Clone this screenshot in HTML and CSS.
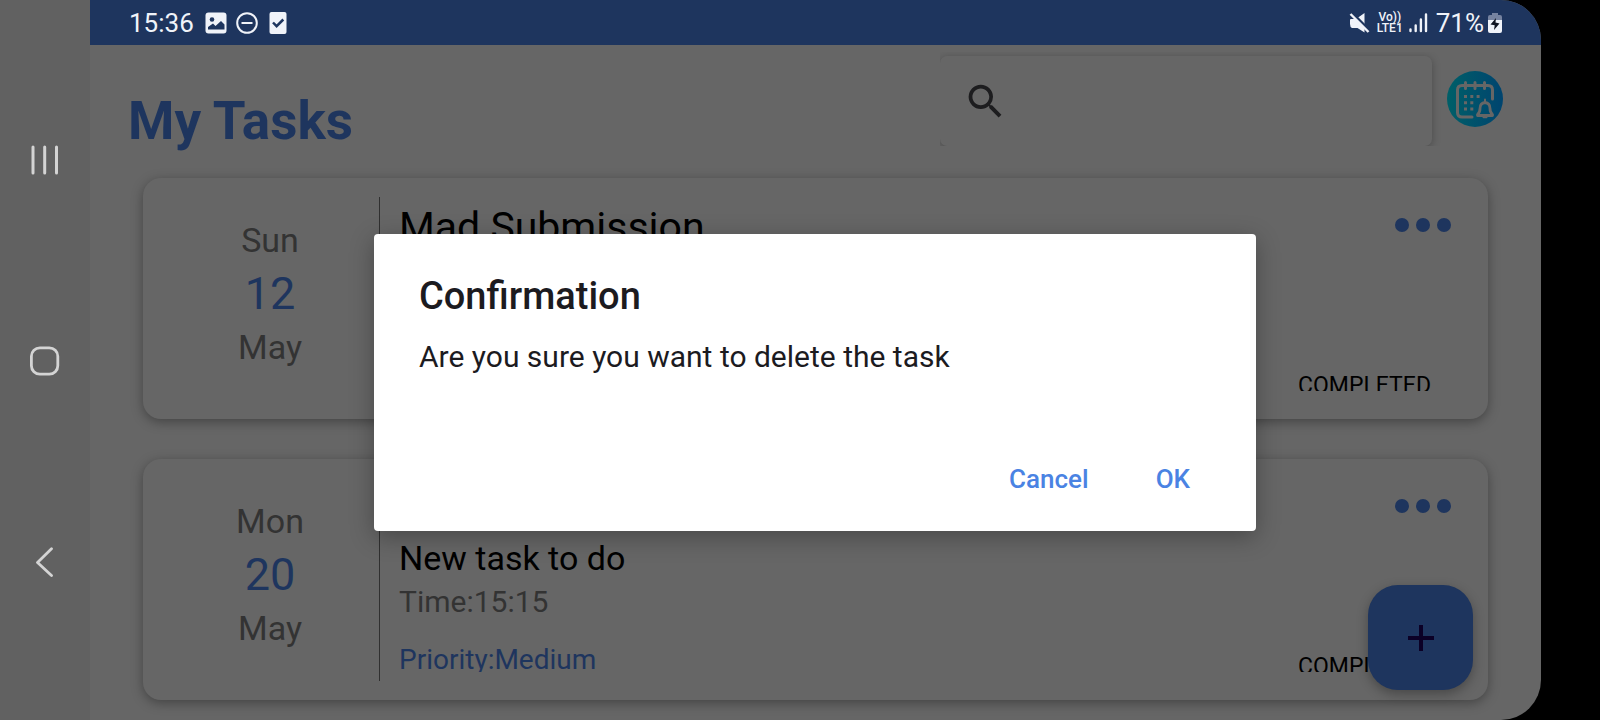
FILE: index.html
```html
<!DOCTYPE html>
<html lang="en">
<head>
<meta charset="utf-8">
<meta name="viewport" content="width=device-width, initial-scale=1">
<title>My Tasks</title>
<link rel="stylesheet" href="styles.css">
</head>
<body>
<div class="device">
  <nav class="sysnav" aria-label="System navigation">
    <button class="sysnav-btn" type="button" aria-label="Recent apps">
      <svg width="30" height="30" viewBox="0 0 30 30" fill="none" stroke="currentColor" stroke-width="3" stroke-linecap="round"><path d="M3 2v26M14.700 2v26M26.500 2v26"/></svg>
    </button>
    <button class="sysnav-btn" type="button" aria-label="Home">
      <svg width="30" height="30" viewBox="0 0 30 30" fill="none" stroke="currentColor" stroke-width="2.800"><rect x="1.400" y="1.800" width="26.400" height="26.400" rx="8.500"/></svg>
    </button>
    <button class="sysnav-btn" type="button" aria-label="Back">
      <svg width="30" height="30" viewBox="0 0 30 30" fill="none" stroke="currentColor" stroke-width="2.800" stroke-linecap="round" stroke-linejoin="round"><path d="M21.500 1.800L7.500 15.500l14 13"/></svg>
    </button>
  </nav>

  <div class="screen">
    <div class="statusbar">
      <div class="status-group status-left">
        <span class="status-text">15:36</span>
        <svg width="22" height="22" viewBox="0 0 22 22"><rect x="0.500" y="0.500" width="21" height="21" rx="3" fill="#f0f3f9"/><circle cx="7" cy="7.500" r="2.300" fill="#1e355e"/><path d="M3 15l5-3.600 2.500 2.600 5.500-5 3.500 3.500v5H3z" fill="#1e355e"/></svg>
        <svg width="22" height="22" viewBox="0 0 22 22" fill="none" stroke="#f0f3f9" stroke-width="2"><circle cx="11" cy="11" r="9.800"/><path d="M5.500 11h11"/></svg>
        <svg class="checkdoc" width="18" height="22" viewBox="0 0 18 22"><rect x="0.500" width="17" height="22" rx="2" fill="#f0f3f9"/><path d="M4 10.500l3.600 3.700L14.300 7.500" fill="none" stroke="#1e355e" stroke-width="2.500"/></svg>
      </div>
      <div class="status-group status-right">
        <svg class="mute" width="22" height="22" viewBox="0 0 22 22"><path d="M1 8q0-1 1-1h5L15.500 1v19.500L8.500 16H3q-2-1-2-4z" fill="#f0f3f9"/><path d="M2.500 0.500l19 19" stroke="#1e355e" stroke-width="3"/><path d="M1.500 2l18 18" stroke="#f0f3f9" stroke-width="2.400"/></svg>
        <span class="volte"><span>Vo))</span><span>LTE1</span></span>
        <svg class="signal" width="20" height="20" viewBox="0 0 20 20" stroke="#f0f3f9" stroke-width="2.400" stroke-linecap="round"><path d="M2.500 16.500v1.500M7.700 12.500v5.500M12.900 6.500v11.500M18 1.500v16.500"/></svg>
        <span class="status-text">71%</span>
        <svg class="battery" width="14" height="22" viewBox="0 0 14 22"><path d="M4 1h6v2h2q2 0 2 2v4H0V5q0-2 2-2h2z" fill="#7683a0"/><path d="M0 8h14v11q0 2-2 2H2q-2 0-2-2z" fill="#f0f3f9"/><path d="M8 6L2.500 12.500l4.200.8L6 18l5.500-6.500-4-1z" fill="#101521"/></svg>
      </div>
    </div>

    <header class="topbar">
      <h1 class="page-title">My Tasks</h1>
      <div class="search-clip">
        <label class="search">
          <svg width="45" height="45" viewBox="0 0 24 24" fill="#1d1d1f"><path d="M15.500 14h-.79l-.28-.27A6.471 6.471 0 0 0 16 9.500 6.500 6.500 0 1 0 9.500 16c1.610 0 3.090-.59 4.230-1.570l.27.28v.79l5 4.990L20.490 19l-4.990-5zm-6 0C7.010 14 5 11.990 5 9.500S7.010 5 9.500 5 14 7.010 14 9.500 11.990 14 9.500 14z"/></svg>
          <input class="search-input" type="search" aria-label="Search tasks">
        </label>
      </div>
      <button class="avatar" type="button" aria-label="Calendar reminders">
        <svg width="56" height="56" viewBox="0 0 56 56" fill="none">
          <defs><linearGradient id="disc" x1="0" y1="0" x2="1" y2="0"><stop offset="0" stop-color="#005f68"/><stop offset="1" stop-color="#00446f"/></linearGradient></defs>
          <circle cx="28" cy="28" r="28" fill="url(#disc)"/>
          <g stroke="#666" stroke-width="3" stroke-linecap="round">
            <path d="M25 46H15q-4.500 0-4.500-4.500V19q0-4.500 4.500-4.500h26q4.500 0 4.500 4.500v9"/>
            <path d="M18.500 11.500v6M28 11.500v6M37.500 11.500v6"/>
            <path d="M30.500 43.500q2.500-2 2.500-6 0-5.500 5-6 5 .5 5 6 0 4 2.500 6v1h-15z" stroke-linejoin="round" stroke-width="2.800"/>
            <path d="M38 28.500v2M36.500 46.200h3" stroke-width="2"/>
          </g>
          <g fill="#666"><path d="M17 24h3v3h-3zM23.300 24h3v3h-3zM29.600 24h3v3h-3zM17 30.300h3v3h-3zM23.300 30.300h3v3h-3zM17 36.600h3v3h-3zM23.300 36.600h3v3h-3z"/></g>
        </svg>
      </button>
    </header>

    <main class="tasks">
      <article class="card">
        <div class="date"><span>Sun</span><span class="day">12</span><span>May</span></div>
        <div class="task">
          <div class="task-head">
            <h2 class="task-title">Mad Submission</h2>
            <button class="more" type="button" aria-label="More options"><svg width="56" height="14" viewBox="0 0 56 14" fill="currentColor"><circle cx="7" cy="7" r="7"/><circle cx="28" cy="7" r="7"/><circle cx="49" cy="7" r="7"/></svg></button>
          </div>
          <div class="task-foot"><span class="state">COMPLETED</span></div>
        </div>
      </article>

      <article class="card">
        <div class="date"><span>Mon</span><span class="day">20</span><span>May</span></div>
        <div class="task">
          <div class="task-head">
            <button class="more" type="button" aria-label="More options"><svg width="56" height="14" viewBox="0 0 56 14" fill="currentColor"><circle cx="7" cy="7" r="7"/><circle cx="28" cy="7" r="7"/><circle cx="49" cy="7" r="7"/></svg></button>
          </div>
          <p class="task-note">New task to do</p>
          <p class="task-time">Time:15:15</p>
          <div class="task-foot"><span class="priority">Priority:Medium</span><span class="state">COMPLETED</span></div>
        </div>
      </article>
    </main>

    <button class="fab" type="button" aria-label="Add task">
      <svg width="28" height="28" viewBox="0 0 28 28" stroke="#0b0026" stroke-width="4"><path d="M14 1v26M1 14h26"/></svg>
    </button>

    <div class="overlay">
      <section class="dialog" role="dialog" aria-modal="true" aria-labelledby="dialog-title">
        <h2 class="dialog-title" id="dialog-title">Confirmation</h2>
        <p class="dialog-text">Are you sure you want to delete the task</p>
        <div class="dialog-actions">
          <button class="dialog-btn" type="button">Cancel</button>
          <button class="dialog-btn" type="button">OK</button>
        </div>
      </section>
    </div>
  </div>
</div>
</body>
</html>
```

FILE: styles.css
```css
* { box-sizing: border-box; }

body {
  margin: 0;
  background: #000;
  font-family: Roboto, "Liberation Sans", sans-serif;
}

h1, h2, p { margin: 0; font-weight: 400; }

button {
  padding: 0;
  border: 0;
  background: none;
  font: inherit;
  cursor: pointer;
}

svg { display: block; flex: none; }

.device {
  display: flex;
  min-height: 100vh;
  padding-right: 59px;
}

/* system navigation */
.sysnav {
  flex: none;
  display: flex;
  flex-direction: column;
  width: 90px;
  padding: 60px 0 58px;
  background: #616161;
  color: #d4d4d4;
}

.sysnav-btn {
  flex: 1;
  display: grid;
  place-items: center;
  color: inherit;
}

.screen {
  position: relative;
  flex: 1;
  min-width: 0;
  overflow: hidden;
  background: #666;
  border-radius: 0 40px 40px 0;
}

/* status bar */
.statusbar {
  display: flex;
  justify-content: space-between;
  height: 45px;
  padding: 0 39px;
  background: #1e355e;
  color: #f0f3f9;
}

.status-group { display: flex; align-items: center; }
.status-left { gap: 9px; }
.status-left .status-text { margin-right: 2px; }
.status-text { font-size: 26px; line-height: 30px; }
.checkdoc { margin-left: 2px; }

.volte {
  display: flex;
  flex-direction: column;
  align-items: center;
  margin: 0 5px 0 6px;
  font-size: 12px;
  font-weight: 500;
  line-height: 11px;
}

.signal { margin-right: 8px; }
.battery { margin-left: 4px; }

/* header */
.topbar {
  display: flex;
  align-items: flex-start;
  height: 133px;
  padding: 0 38px;
}

.page-title {
  flex: 1;
  margin-top: 45px;
  font-size: 53px;
  font-weight: 700;
  line-height: 62px;
  color: #1e355e;
  white-space: nowrap;
}

.search-clip {
  flex: 0 1 502px;
  min-width: 0;
  margin-top: 7px;
  padding: 4px 10px 0 0;
  overflow: hidden;
}

.search {
  display: flex;
  align-items: center;
  height: 90px;
  padding: 0 23px;
  border-radius: 7px;
  background: #666;
  box-shadow: 0 2px 8px rgba(0, 0, 0, 0.28);
}

.search-input {
  flex: 1;
  min-width: 0;
  height: 60px;
  border: 0;
  outline: 0;
  background: none;
  font: inherit;
  font-size: 30px;
}

.avatar { margin: 26px 0 0 5px; }

/* task list */
.tasks {
  display: flex;
  flex-direction: column;
  gap: 40px;
  padding: 0 53px 20px;
}

.card {
  display: flex;
  padding: 19px 18px;
  border-radius: 18px;
  background: #666;
  box-shadow: 0 3px 12px rgba(0, 0, 0, 0.34);
}

.date {
  flex: none;
  display: flex;
  flex-direction: column;
  align-items: center;
  gap: 6px;
  width: 219px;
  padding-top: 23px;
  border-right: 1px solid #303030;
  font-size: 34px;
  line-height: 40px;
  color: #333;
}

.day {
  font-size: 45px;
  line-height: 55px;
  color: #1e355e;
}

.task {
  flex: 1;
  min-width: 0;
  display: grid;
  grid-template-rows: 48px 40px 36px 46px;
  row-gap: 6px;
  padding: 6px 19px 9px;
}

.task-head {
  grid-row: 1;
  display: flex;
  align-items: flex-start;
}

.task-title {
  font-size: 41px;
  line-height: 48px;
  color: #000;
}

.more {
  display: grid;
  place-items: center;
  height: 44px;
  margin-left: auto;
  color: #1e355e;
}

.task-note {
  grid-row: 2;
  font-size: 34px;
  line-height: 40px;
  color: #000;
}

.task-time {
  grid-row: 3;
  font-size: 30px;
  line-height: 36px;
  color: #333;
}

/* the row is shorter than its labels, so their lower edge is clipped */
.task-foot {
  grid-row: 4;
  display: flex;
  align-items: flex-start;
  padding: 17px 20px 0 0;
  overflow: hidden;
  white-space: nowrap;
}

.priority {
  font-size: 28px;
  line-height: 34px;
  color: #1e355e;
}

.state {
  margin-left: auto;
  padding-top: 10px;
  font-size: 23px;
  line-height: 28px;
  color: #000;
}

.fab {
  position: absolute;
  right: 68px;
  bottom: 30px;
  display: grid;
  place-items: center;
  width: 105px;
  height: 105px;
  border-radius: 30px;
  background: #1e355e;
  box-shadow: 0 4px 12px rgba(0, 0, 0, 0.3);
}

/* confirmation dialog */
.overlay {
  position: absolute;
  inset: 45px 1px 0 0;
  display: grid;
  place-items: center;
}

.dialog {
  width: 882px;
  max-width: 90%;
  padding: 40px 45px 21px;
  border-radius: 4px;
  background: #fff;
  box-shadow: 0 6px 24px rgba(0, 0, 0, 0.3);
}

.dialog-title {
  font-size: 38px;
  font-weight: 500;
  line-height: 45px;
  color: #1c1b1f;
}

.dialog-text {
  margin-top: 20px;
  font-size: 30px;
  line-height: 36px;
  color: #1c1b1f;
}

.dialog-actions {
  display: flex;
  justify-content: flex-end;
  gap: 25px;
  margin-top: 72px;
}

.dialog-btn {
  height: 63px;
  padding: 0 21px;
  font-size: 26px;
  font-weight: 500;
  color: #4a83e3;
}
```
